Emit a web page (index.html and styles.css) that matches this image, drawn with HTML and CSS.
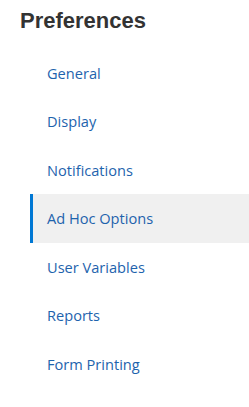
FILE: index.html
```html
<!DOCTYPE html>
<html lang="en">
<head>
<meta charset="utf-8">
<link rel="stylesheet" href="styles.css">
</head>
<body>
<div class="panel">
  <h1 class="title">Preferences</h1>
  <nav class="menu">
    <a class="item">General</a>
    <a class="item">Display</a>
    <a class="item">Notifications</a>
    <a class="item active">Ad Hoc Options</a>
    <a class="item">User Variables</a>
    <a class="item">Reports</a>
    <a class="item">Form Printing</a>
  </nav>
</div>
</body>
</html>
```
FILE: styles.css
```css
html, body {
  margin: 0;
  padding: 0;
  background: #fff;
}
.panel {
  width: 249px;
  height: 407px;
  overflow: hidden;
}
.title {
  margin: 0;
  padding: 8px 0 0 20px;
  height: 40.5px;
  box-sizing: content-box;
  font-family: "Liberation Sans", Arial, sans-serif;
  font-weight: bold;
  font-size: 22px;
  line-height: 26px;
  color: #333;
}
.menu {
  display: flex;
  flex-direction: column;
  margin-left: 30px;
}
.item {
  display: block;
  padding: 14px 14px 14px 14px;
  line-height: 20.5px;
  font-family: "Open Sans", "Noto Sans", sans-serif;
  font-size: 14.6px;
  color: #1e63ad;
  border-left: 3px solid transparent;
}
.item.active {
  background: #f0f0f0;
  border-left-color: #0078d4;
}
```
